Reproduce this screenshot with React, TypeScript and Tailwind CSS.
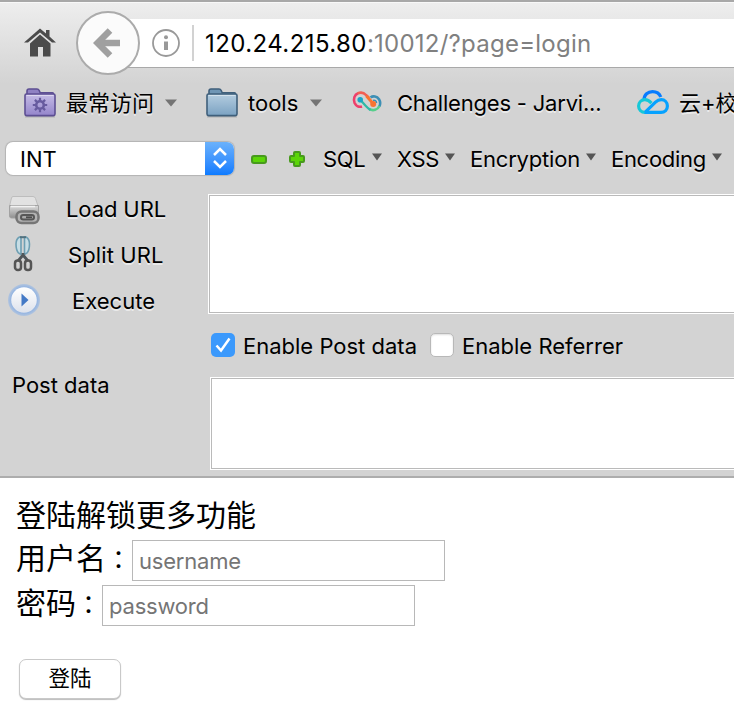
import React from "react";

const shadow = "[text-shadow:0_1.5px_0_rgba(255,255,255,0.55)]";

function Caret({ className }: { className: string }) {
  return (
    <svg viewBox="0 0 12 8" preserveAspectRatio="none" className={`h-2 w-3 shrink-0 ${className}`}>
      <path d="M0 0.5h12L6 7.5z" fill="currentColor" />
    </svg>
  );
}

function HomeIcon() {
  return (
    <svg viewBox="0 0 32 30" className="-mt-[1px] ml-[24px] h-[30px] w-8 shrink-0" fill="#4b4b4b">
      <path d="M16 0.5 22 5.500V2h3.500v6.500L32 14.500h-4L16 4.500 4 14.500H0z" />
      <path d="M16 6.500 26.500 15.500v13H19V19h-5v9.500H6V15.500z" />
    </svg>
  );
}

function Folder({ kind }: { kind: "purple" | "blue" }) {
  const purple = kind === "purple";
  const edge = purple ? "#5d4f93" : "#3f5f7b";
  return (
    <svg viewBox="0 0 32 30" className="h-[30px] w-8 shrink-0">
      <defs>
        <linearGradient id={kind} x1="0" y1="0" x2="0" y2="1">
          <stop offset="0" stopColor={purple ? "#c5bce6" : "#b4cde0"} />
          <stop offset="1" stopColor={purple ? "#9485cb" : "#7ba2c2"} />
        </linearGradient>
      </defs>
      <path d="M1 28.8h30" stroke="#b5b5b5" strokeWidth="1.5" />
      <path d="M3 8V3.2Q3 1 5 1h8q1.500 0 2.200 1.500L16.200 4.800H28.500q1 0 1 1.500V8z" fill={purple ? "#8f81c3" : "#6f96b5"} stroke={edge} strokeWidth="1.6" />
      <path d="M1 7.500q0-1.500 1.500-1.500h27q1.500 0 1.500 1.500V26q0 1.600-1.600 1.600H2.600Q1 27.600 1 26z" fill={`url(#${kind})`} stroke={edge} strokeWidth="1.6" />
      <path d="M2.500 7.500h27" stroke="#ffffff" strokeOpacity="0.45" />
      {purple && (
        <g fill="none" stroke="#675b9f">
          <circle cx="16" cy="17" r="3.800" strokeWidth="2.600" />
          <path d="M16 9.800v2.700M16 21.500v2.700M8.800 17h2.700M20.500 17h2.700M10.900 11.900l2 2M19.100 20.100l2 2M21.100 11.900l-2 2M12.900 20.100l-2 2" strokeWidth="2.200" />
        </g>
      )}
    </svg>
  );
}

function JarvisIcon() {
  return (
    <svg viewBox="0 0 30 22" className="ml-[30px] mt-[-2px] h-[22px] w-[30px] shrink-0" fill="none" strokeWidth="2.600">
      <path d="M10 15.500C7 16.500 4 15 2.600 12 1 8 2.500 3.500 6 2.200" stroke="#ee3f6b" />
      <path d="M5.500 2.400C9 1 12 1.800 14 4l3 3" stroke="#f25f52" />
      <path d="M18.500 6.500C21 4.500 25 5.200 27 8.200c1.500 2.500 1.500 5 .3 7.300" stroke="#3d8fb5" />
      <path d="M21 9.500c2-.8 3.500.5 3.500 2.500" stroke="#3d8fb5" strokeWidth="1.500" />
      <path d="M27.500 15c-2 4-6.500 5.200-10 3.200" stroke="#57cf8b" />
      <path d="M18.500 19c-3-1.500-6-5.500-9.500-9.500" stroke="#2fb9a8" strokeWidth="2.200" />
      <path d="M14.500 5l7 8" stroke="#f9742f" strokeWidth="3" />
      <circle cx="8.200" cy="8.800" r="2.800" fill="#19a5c6" />
      <circle cx="21.200" cy="13" r="3" fill="#f77432" />
    </svg>
  );
}

function CloudIcon() {
  return (
    <svg viewBox="0 0 32 24" className="-mt-[2px] ml-[36px] h-6 w-8 shrink-0" fill="none" strokeWidth="3.200">
      <path d="M7 10C7 4.500 11 1.600 15.500 1.600c4 0 7 2.200 8.300 5.400" stroke="#087cff" />
      <path d="M14.500 13.200C12 10.500 10 9.500 7.500 9.700 4 10 1.600 12.700 1.600 16c0 3.800 2.800 6.400 6.500 6.400" stroke="#16c8d8" />
      <path d="M7.500 22.400H24c3.800 0 6.400-2.800 6.400-6.400S27.800 9.700 24.300 9.700c-2.300 0-4 .8-5.800 2.500L8.500 21.800" stroke="#06a2ff" />
    </svg>
  );
}

function LoadIcon() {
  return (
    <svg viewBox="0 0 32 30" className="h-[30px] w-8">
      <defs>
        <linearGradient id="drive" x1="0" y1="0" x2="0" y2="1">
          <stop offset="0" stopColor="#dcdcdc" />
          <stop offset="1" stopColor="#8f8f8f" />
        </linearGradient>
      </defs>
      <path d="M5 1.500h20q2 0 2.500 2L30 11H1.500L3.500 3q.4-1.500 1.500-1.500z" fill="#e2e2e2" stroke="#bdbdbd" />
      <path d="M1.500 10.500h29V21q0 2-2 2h-25q-2 0-2-2z" fill="url(#drive)" stroke="#a2a2a2" />
      <path d="M3 11.500h24" stroke="#f2f2f2" strokeWidth="1.500" />
      <rect x="8.500" y="16.500" width="22" height="11.500" rx="5" fill="#b3b3b3" stroke="#767676" strokeWidth="2.500" />
      <rect x="13" y="20" width="13" height="4.500" rx="2.200" fill="#a9a9a9" stroke="#565656" strokeWidth="2" />
      <path d="M18 22.300h6" stroke="#4c4c4c" strokeWidth="1.800" />
    </svg>
  );
}

function ScissorsIcon() {
  return (
    <svg viewBox="0 0 20 36" className="h-9 w-5" fill="none">
      <path d="M6.500 1Q3 3 3 8q0 6 2.500 9L8 18.500V1zM13 1q3.500 2 3.500 7 0 6-2.500 9l-2.500 1.500V1z" fill="#c6dde5" stroke="#6e9fb3" strokeWidth="1.600" />
      <path d="M7 1.200h6" stroke="#51717f" strokeWidth="2" />
      <path d="M10 17v4M10 19l-5 6M10 19l5 6" stroke="#4f565a" strokeWidth="2.800" />
      <rect x="2" y="24.500" width="6" height="9.500" rx="2.800" stroke="#555" strokeWidth="2.500" />
      <rect x="12" y="24.500" width="6" height="9.500" rx="2.800" stroke="#555" strokeWidth="2.500" />
    </svg>
  );
}

function ExecuteIcon() {
  return (
    <svg viewBox="0 0 32 32" className="h-8 w-8">
      <defs>
        <radialGradient id="glow">
          <stop offset="0.78" stopColor="#8fb2e2" />
          <stop offset="1" stopColor="#b3c5de" />
        </radialGradient>
        <linearGradient id="face" x1="0" y1="0" x2="0" y2="1">
          <stop offset="0" stopColor="#ffffff" />
          <stop offset="1" stopColor="#dde2ec" />
        </linearGradient>
      </defs>
      <circle cx="16" cy="16" r="16" fill="url(#glow)" />
      <circle cx="16" cy="16" r="12.800" fill="url(#face)" />
      <path d="M13.500 9.500v13l7-6.500z" fill="#4379c6" />
    </svg>
  );
}

function Action({ icon, label, row, text }: { icon: React.ReactNode; label: string; row: string; text: string }) {
  return (
    <div className={`flex items-center ${row}`}>
      <div className="flex w-12 shrink-0 justify-center">{icon}</div>
      <span className={`${text} ${shadow}`}>{label}</span>
    </div>
  );
}

function Menu({ label, width, text }: { label: string; width: string; text: string }) {
  return (
    <div className={`flex shrink-0 items-center ${width}`}>
      <span className={`${text} ${shadow}`}>{label}</span>
      <Caret className="mb-[5px] ml-auto !w-[10px] text-[#555555]" />
    </div>
  );
}

export default function App() {
  return (
    <div className="h-[704px] w-[734px] overflow-hidden whitespace-nowrap bg-white font-['Inter','Noto_Sans_CJK_SC',sans-serif] text-[22px] leading-7 text-black">
      <header className="h-[478px] border-b-2 border-[#adadad] bg-[#d3d3d3]">
        <div className="h-[84px] border-t-2 border-[#a8a8a8] bg-linear-to-b from-[#eeeeee] to-[#d3d3d3]">
          <div className="flex h-[82px] items-center border-t border-[#f8f8f8]">
            <HomeIcon />
            <div className="z-10 -mt-[2px] ml-[20px] flex size-16 shrink-0 items-center justify-center rounded-full border-2 border-[#ababab] bg-[#fbfbfb]">
              <svg viewBox="0 0 28 32" className="mr-[3px] h-8 w-7" fill="none" stroke="#a0a0a0">
                <path d="M5 16h22" strokeWidth="6.500" />
                <path d="M17 3.500 4.500 16 17 28.500" strokeWidth="6.500" />
              </svg>
            </div>
            <div className="-ml-3 flex h-[49px] flex-1 items-center border-b border-[#a9a9a9] bg-white">
              <svg viewBox="0 0 28 28" className="ml-6 size-7 shrink-0" fill="none" stroke="#999">
                <circle cx="14" cy="14" r="13" strokeWidth="1.800" />
                <path d="M14 12.500v8.500" strokeWidth="4" />
                <circle cx="14" cy="8.300" r="2" fill="#999" stroke="none" />
              </svg>
              <div className="ml-3 h-9 w-[2px] bg-[#d2d2d2]" />
              <span className="ml-[11px] pt-[2px] text-[24px] tracking-[0.24px] text-[#808080]"><span className="tracking-[0.42px] text-black">120.24.215.80</span>:10012/?page=login</span>
            </div>
          </div>
        </div>

        <nav className="flex h-[38px] items-center pl-6">
          <Folder kind="purple" />
          <span className={`ml-[10px] w-[99px] shrink-0 ${shadow}`}>最常访问</span>
          <Caret className="text-[#747474]" />
          <div className="ml-[29px] flex shrink-0"><Folder kind="blue" /></div>
          <span className={`ml-[10px] w-[62px] shrink-0 ${shadow}`}>tools</span>
          <Caret className="text-[#747474]" />
          <JarvisIcon />
          <span className={`ml-[15px] w-[204px] shrink-0 tracking-[-0.2px] ${shadow}`}>Challenges - Jarvi...</span>
          <CloudIcon />
          <span className={`ml-[10px] shrink-0 ${shadow}`}>云+校</span>
        </nav>

        <div className="flex h-[72px] items-center pl-[6px]">
          <div className="flex h-[33px] w-[228px] shrink-0 items-center overflow-hidden rounded-[7px] bg-white shadow-[0_0_1px_1px_#b3b3b3]">
            <span className="ml-[14px] flex-1 pt-[2px]">INT</span>
            <div className="flex h-full w-[29px] items-center justify-center bg-linear-to-b from-[#6ab1fb] to-[#0a7bff]">
              <svg viewBox="0 0 14 22" className="h-[22px] w-[14px]" fill="none" stroke="#fff" strokeWidth="2.500">
                <path d="M1 8l6-6 6 6M1 14l6 6 6-6" />
              </svg>
            </div>
          </div>
          <div className="ml-[17px] mt-[2px] h-[9px] w-4 shrink-0 rounded-[3px] border-2 border-[#479a1c] bg-[#5bd508]" />
          <svg viewBox="0 0 18 18" className="ml-[21px] mt-[2px] size-[18px] shrink-0">
            <path d="M7 2h4q1 0 1 1v3h3q1 0 1 1v4q0 1-1 1h-3v3q0 1-1 1H7q-1 0-1-1v-3H3q-1 0-1-1V7q0-1 1-1h3V3q0-1 1-1z" fill="#5bd508" stroke="#479a1c" strokeWidth="2" strokeLinejoin="round" />
          </svg>
          <div className="ml-[17px] flex gap-[15px] pt-[2px]">
            <Menu label="SQL" width="w-[59px]" text="tracking-[-0.3px]" />
            <Menu label="XSS" width="w-[58px]" text="tracking-[-0.3px]" />
            <Menu label="Encryption" width="w-[126px]" text="tracking-[-0.2px]" />
            <Menu label="Encoding" width="w-[111px]" text="tracking-[-0.3px]" />
          </div>
        </div>

        <div className="flex h-[120px]">
          <div className="w-[208px] shrink-0">
            <Action icon={<LoadIcon />} label="Load URL" row="h-[31px]" text="ml-[18px] -mt-[2px] tracking-[-0.1px]" />
            <Action icon={<div className="-mt-[2px] mr-[2px]"><ScissorsIcon /></div>} label="Split URL" row="h-[60px]" text="ml-[20px] tracking-[0.1px]" />
            <Action icon={<div className="-mt-[2px]"><ExecuteIcon /></div>} label="Execute" row="h-[31px]" text="ml-[24px]" />
          </div>
          <div className="flex-1 border border-r-0 border-white">
            <div className="h-full border border-r-0 border-[#bababa] bg-white" />
          </div>
        </div>

        <div className="flex h-[63px] items-center pl-[211px]">
          <div className="-mt-[2px] flex size-6 shrink-0 items-center justify-center rounded-[5px] bg-[#3b99fc]">
            <svg viewBox="0 0 16 16" className="size-4" fill="none" stroke="#fff" strokeWidth="2.500">
              <path d="M1.500 8.500 6 13.500 14.500 1.500" />
            </svg>
          </div>
          <span className="ml-2 w-[187px] shrink-0">Enable Post data</span>
          <div className="-mt-[2px] size-6 shrink-0 rounded-[5px] border border-[#b8b8b8] bg-white shadow-[inset_0_1px_2px_#ddd]" />
          <span className="ml-2 shrink-0">Enable Referrer</span>
        </div>

        <div className="flex h-[93px]">
          <div className="w-[210px] shrink-0 pl-3"><span className="-mt-[6px] block">Post data</span></div>
          <div className="flex-1 border border-r-0 border-white">
            <div className="h-full border border-r-0 border-[#bababa] bg-white" />
          </div>
        </div>
      </header>

      <main className="pl-4 pt-[15px] text-[30px] leading-[44px]">
        <div>登陆解锁更多功能</div>
        <div className="mt-[3px] flex h-[41px] items-center">
          <span className="-mt-[5px] flex w-[116px]">用户名<span className="font-['Noto_Sans_CJK_JP',sans-serif] text-[25px]">：</span></span>
          <div className="flex h-[41px] w-[313px] items-center border border-[#b8b8b8] pl-[6px] text-[22px] tracking-[-0.2px] text-[#757575]">username</div>
        </div>
        <div className="mt-1 flex h-[41px] items-center">
          <span className="-mt-[5px] flex w-[86px]">密码<span className="font-['Noto_Sans_CJK_JP',sans-serif] text-[25px]">：</span></span>
          <div className="flex h-[41px] w-[313px] items-center border border-[#b8b8b8] pl-[6px] text-[22px] tracking-[-0.2px] text-[#757575]">password</div>
        </div>
        <button className="ml-[3px] mt-[33px] flex h-10 w-[102px] items-center justify-center rounded-[7px] border border-[#c9c9c9] bg-white pb-[2px] text-[21.500px] shadow-[0_1px_1px_#bcbcbc]">登陆</button>
      </main>
    </div>
  );
}
